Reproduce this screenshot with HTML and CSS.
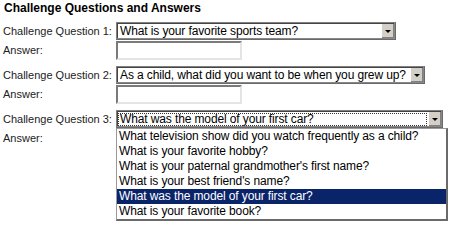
FILE: index.html
```html
<!DOCTYPE html>
<html lang="en">
<head>
  <meta charset="UTF-8">
  <title>Challenge Questions</title>
  <link rel="stylesheet" href="styles.css">
</head>
<body>
  <div class="page">
    <h3 class="heading">Challenge Questions and Answers</h3>

    <div class="qa">
      <div class="row">
        <label>Challenge Question 1:</label>
        <div class="combo q1">
          <span class="value">What is your favorite sports team?</span>
          <span class="arrow"></span>
        </div>
      </div>
      <div class="row">
        <label>Answer:</label>
        <div class="answer"></div>
      </div>
    </div>

    <div class="qa">
      <div class="row">
        <label>Challenge Question 2:</label>
        <div class="combo q2">
          <span class="value">As a child, what did you want to be when you grew up?</span>
          <span class="arrow"></span>
        </div>
      </div>
      <div class="row">
        <label>Answer:</label>
        <div class="answer"></div>
      </div>
    </div>

    <div class="qa">
      <div class="row">
        <label>Challenge Question 3:</label>
        <div class="combo q3 open">
          <span class="value focus">What was the model of your first car?</span>
          <span class="arrow"></span>
          <ul class="options">
            <li>What television show did you watch frequently as a child?</li>
            <li>What is your favorite hobby?</li>
            <li>What is your paternal grandmother's first name?</li>
            <li>What is your best friend's name?</li>
            <li class="selected">What was the model of your first car?</li>
            <li>What is your favorite book?</li>
          </ul>
        </div>
      </div>
      <div class="row">
        <label>Answer:</label>
        <div class="answer"></div>
      </div>
    </div>
  </div>
</body>
</html>
```

FILE: styles.css
```css
html,
body {
  min-height: 225px;
}

body {
  margin: 0;
  background: #fff;
  font-family: "Liberation Sans", Arial, sans-serif;
  color: #000;
}

.page {
  padding: 1px 3px;
}

.heading {
  margin: 0 0 7px 1px;
  font-size: 12px;
  line-height: 14px;
  font-weight: bold;
}

.qa {
  margin-bottom: 6px;
}

.row {
  display: flex;
  align-items: flex-start;
  margin-bottom: 1px;
}

.row label {
  width: 113px;
  flex: none;
  font-size: 11px;
  line-height: 18px;
  color: #222;
}

.combo {
  position: relative;
  display: flex;
  align-items: center;
  height: 14px;
  padding: 1px;
  background: #fff;
  border: 1px solid #808080;
  border-right-color: #6a6a6a;
  border-bottom-color: #6a6a6a;
  box-shadow: inset -1px -1px 0 #888, inset 1px 1px 0 #444;
}

.combo.q1 { width: 276px; }
.combo.q2 { width: 305px; }
.combo.q3 { width: 323px; }

.combo .value {
  flex: 1;
  padding: 0 2px;
  font-size: 12px;
  letter-spacing: -0.12px;
  line-height: 13px;
  white-space: nowrap;
  overflow: hidden;
}

.combo .value.focus {
  outline: 1px dotted #333;
  outline-offset: -1px;
  margin-right: 1px;
}

.combo .arrow {
  position: relative;
  width: 12px;
  height: 14px;
  flex: none;
  background: #d4d0c8;
  border-left: 1px solid #fff;
  box-shadow: inset -1px -1px 0 #808080;
}

.combo .arrow::after {
  content: "";
  position: absolute;
  left: 3px;
  top: 6px;
  border-left: 3px solid transparent;
  border-right: 3px solid transparent;
  border-top: 3px solid #000;
}

.answer {
  width: 122px;
  height: 15px;
  background: #fff;
  border: 2px solid;
  border-color: #7a7a7a #e4e4e4 #e4e4e4 #7a7a7a;
}

.options {
  position: absolute;
  top: 17px;
  left: -1px;
  width: 329px;
  margin: 0;
  padding: 0;
  list-style: none;
  background: #fff;
  border: 1px solid #9a9a9a;
  border-right: 2px solid #6a6a6a;
  border-bottom: 2px solid #6a6a6a;
  z-index: 2;
}

.options li {
  height: 15px;
  padding: 0 2px;
  font-size: 12px;
  letter-spacing: -0.12px;
  line-height: 15px;
  white-space: nowrap;
}

.options li.selected {
  background: #0a246a;
  color: #fff;
}
```
